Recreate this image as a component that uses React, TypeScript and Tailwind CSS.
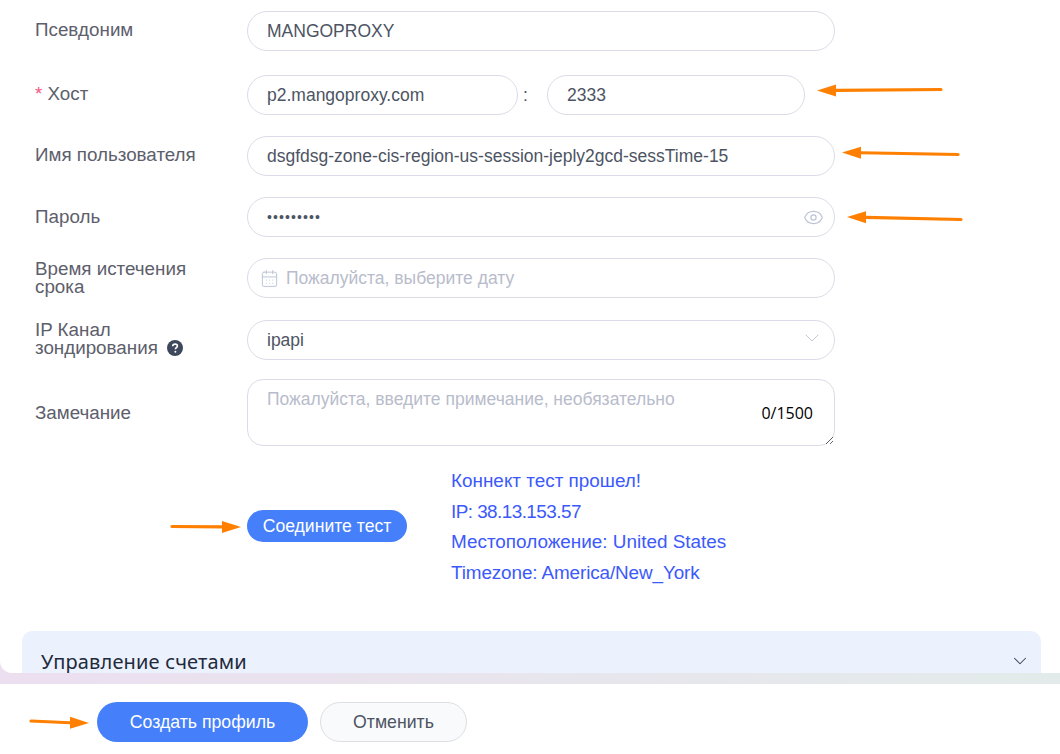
import { CalendarDays, ChevronDown, Eye } from "lucide-react";
import type { ReactNode } from "react";

const font = { fontFamily: '"Liberation Sans", Arial, sans-serif' };

function Row({ label, className, labelClass = "-translate-y-px", children }: { label: ReactNode; className: string; labelClass?: string; children: ReactNode }) {
  return (
    <div className={`flex items-center ${className}`}>
      <div className={`w-[212px] shrink-0 text-[18.8px] leading-[18.5px] text-[#5d606c] ${labelClass}`}>{label}</div>
      {children}
    </div>
  );
}

function Field({ value, type = "text", width = "w-[588px]", className = "text-[17.5px]" }: { value: string; type?: string; width?: string; className?: string }) {
  return (
    <input
      readOnly
      type={type}
      value={value}
      className={`${width} h-10 rounded-[20px] border border-[#dcdce8] bg-white px-[19px] text-[#4d5463] outline-none ${className}`}
    />
  );
}

function Arrow({ x1, y1, x2, y2 }: { x1: number; y1: number; x2: number; y2: number }) {
  // tail (x1,y1) to tip (x2,y2), head is about 20px long
  const dir = x2 > x1 ? -1 : 1;
  const bx = x2 + dir * 19;
  const by = y2 + (y1 - y2) * 0.12;
  return (
    <g>
      <line x1={x1} y1={y1} x2={bx} y2={by} stroke="#ff8000" strokeWidth="3.2" strokeLinecap="round" />
      <polygon points={`${x2},${y2} ${bx},${by - 6} ${bx},${by + 6}`} fill="#ff8000" />
    </g>
  );
}

export default function App() {
  return (
    <div style={font} className="relative h-[754px] w-[1060px] overflow-hidden bg-white">
      <div className="h-[684px] bg-gradient-to-r from-[#ecdff0] to-[#e3ebea]">
        <div className="h-[673px] overflow-hidden rounded-bl-[12px] bg-white">
          <div className="pl-[35px]">
            <Row label="Псевдоним" className="pt-[11px]">
              <Field value="MANGOPROXY" />
            </Row>

            <Row label={<><span className="text-[#f5577f]">*</span> Хост</>} className="mt-6">
              <Field value="p2.mangoproxy.com" width="w-[271px]" />
              <span className="w-[29px] pl-[5px] text-[17.5px] text-[#4d5463]">:</span>
              <Field value="2333" width="w-[258px]" />
            </Row>

            <Row label="Имя пользователя" className="mt-[21px]">
              <Field value="dsgfdsg-zone-cis-region-us-session-jeply2gcd-sessTime-15" />
            </Row>

            <Row label="Пароль" className="mt-[21px]" labelClass="">
              <div className="relative">
                <Field value="proxypass" type="password" className="text-[14px] tracking-[1.1px]" />
                <Eye className="absolute right-[11px] top-[10px] h-[21px] w-[21px] text-[#bcc3d4]" strokeWidth={1.3} />
              </div>
            </Row>

            <Row label={<>Время истечения<br />срока</>} className="mt-[21px]" labelClass="">
              <div className="flex h-10 w-[588px] items-center rounded-[20px] border border-[#dcdce8] bg-white pl-[12px] text-[17.5px] text-[#b8bccb]">
                <CalendarDays className="mr-[7px] h-[19px] w-[19px] text-[#bcc3d4]" strokeWidth={1.2} />
                Пожалуйста, выберите дату
              </div>
            </Row>

            <Row
              label={
                <>
                  IP Канал
                  <br />
                  зондирования
                  <svg viewBox="0 0 16 16" className="ml-[9px] inline-block h-4 w-4 align-[-2px]">
                    <circle cx="8" cy="8" r="8" fill="#3e485c" />
                    <path d="M5.7 6.2c.1-1.4 1.1-2.1 2.4-2.1s2.3.8 2.3 1.9c0 1.7-2 1.7-2 3.3" fill="none" stroke="#fff" strokeWidth="1.6" />
                    <circle cx="8.4" cy="11.8" r="1" fill="#fff" />
                  </svg>
                </>
              }
              className="mt-[22px]"
            >
              <div className="flex h-10 w-[588px] items-center justify-between rounded-[20px] border border-[#dcdce8] bg-white pl-[19px] pr-[10px] text-[17.5px] text-[#4d5463]">
                ipapi
                <ChevronDown className="h-[24px] w-[24px] -translate-y-[2px] text-[#c3c7d4]" strokeWidth={1} />
              </div>
            </Row>

            <Row label="Замечание" className="mt-[19px]" labelClass="translate-y-px">
              <div className="relative flex">
                <textarea
                  readOnly
                  placeholder="Пожалуйста, введите примечание, необязательно"
                  className="block h-[67px] w-[588px] rounded-[16px] border border-[#dcdce8] bg-white px-[19px] py-[9px] text-[17.5px] leading-[20px] text-[#4d5463] outline-none placeholder:text-[#b8bccb]"
                />
                <span
                  style={{ fontFamily: '"Open Sans", sans-serif' }}
                  className="absolute right-[22px] top-[24px] text-[16px] leading-[20px] text-black"
                >
                  0/1500
                </span>
              </div>
            </Row>

            <div className="mt-[19px] flex items-center pl-[212px]">
              <button className="h-8 w-40 rounded-2xl bg-[#4580fa] text-[17.6px] text-white">Соедините тест</button>
              <div className="ml-[44px] translate-y-px text-[18.9px] leading-[30.7px] text-[#3c59fb]">
                <div>Коннект тест прошел!</div>
                <div className="tracking-[-0.55px]">IP: 38.13.153.57</div>
                <div>Местоположение: United States</div>
                <div className="tracking-[-0.12px]">Timezone: America/New_York</div>
              </div>
            </div>
          </div>

          <div className="ml-[22px] mt-[43px] flex h-[60px] w-[1019px] items-start justify-between rounded-t-[10px] bg-[#ebf2fe] pl-[19px] pr-[10px] pt-[18px]">
            <span style={{ fontFamily: '"Noto Sans", sans-serif' }} className="text-[20px] leading-[26px] tracking-[0.15px] text-[#222a3c]">
              Управление счетами
            </span>
            <ChevronDown className="mt-[1px] h-[22px] w-[22px] text-[#3a4254]" strokeWidth={1.1} />
          </div>
        </div>
      </div>

      <div className="flex gap-3 pl-[97px] pt-[18px]">
        <button className="h-10 w-[211px] rounded-[20px] bg-[#4580fa] text-[17.7px] text-white">Создать профиль</button>
        <button className="h-10 w-[147px] rounded-[20px] border border-[#dedfe3] bg-[#f9fafc] text-[17.7px] text-[#4d5463]">Отменить</button>
      </div>

      {/* annotation arrows drawn on top of the screenshot */}
      <svg className="absolute left-0 top-0 h-[754px] w-[1060px]" viewBox="0 0 1060 754" fill="none">
        <Arrow x1={941} y1={89.5} x2={817} y2={90.5} />
        <Arrow x1={958} y1={154.5} x2={842} y2={152.5} />
        <Arrow x1={961} y1={219.5} x2={847} y2={217} />
        <Arrow x1={172} y1={526.5} x2={241} y2={527} />
        <Arrow x1={31} y1={721} x2={89} y2={723} />
      </svg>
    </div>
  );
}
